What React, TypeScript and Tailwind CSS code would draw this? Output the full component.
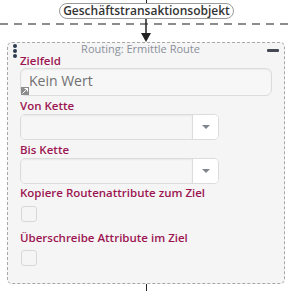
import React from "react";

const font = { fontFamily: '"Open Sans", "Noto Sans", sans-serif' };

function FieldLabel({ text, className = "" }: { text: string; className?: string }) {
  return (
    <div className={`h-[14px] text-[11.5px] leading-[14px] font-semibold text-[#9c1552] whitespace-nowrap ${className}`}>
      {text}
    </div>
  );
}

function SelectBox() {
  return (
    <div className="flex h-[26px] w-[199px] rounded-[5px] border border-[#dcdcdc] bg-white overflow-hidden">
      <div className="flex-1 bg-[#f6f6f6] shadow-[inset_0_1px_2px_rgba(0,0,0,0.06)]" />
      <div className="flex w-[26px] items-center justify-center border-l border-[#dcdcdc] bg-white">
        <svg width="8" height="4" viewBox="0 0 8 4">
          <path d="M0 0 H8 L4 4 Z" fill="#7f8690" />
        </svg>
      </div>
    </div>
  );
}

function Checkbox({ className = "" }: { className?: string }) {
  return <div className={`h-[16px] w-[16px] rounded-[3px] border border-[#d8d8d8] bg-[#f5f5f5] ${className}`} />;
}

export default function App() {
  return (
    <div className="h-[291px] w-[293px] overflow-hidden bg-white" style={font}>
      {/* connector above the node */}
      <div className="flex flex-col items-center">
        <div className="h-[3px] w-px bg-[#222]" />
        <div className="rounded-full border border-[#9a9a9a] bg-white px-[3px] text-[12px] leading-[14px] font-semibold text-[#333] whitespace-nowrap">
          Geschäftstransaktionsobjekt
        </div>
        <svg width="293" height="23" viewBox="0 0 293 23" className="block">
          <line x1="0" y1="5" x2="293" y2="5" stroke="#8c8c8c" strokeWidth="2" strokeDasharray="8 6" />
          <line x1="146" y1="0" x2="146" y2="15" stroke="#222" strokeWidth="1.5" />
          <path d="M141 14 H151 L146 23 Z" fill="#222" />
        </svg>
      </div>

      {/* node */}
      <div className="mx-[7px] h-[242px] w-[278px] rounded-[5px] border border-dashed border-[#a8a8a8] bg-[#f5f5f5]">
        <div className="relative h-[11px]">
          <div className="absolute left-[5px] top-[1px] flex flex-col gap-[1px]">
            <span className="h-[4px] w-[4px] rounded-full bg-[#2e3a4e]" />
            <span className="h-[4px] w-[4px] rounded-full bg-[#2e3a4e]" />
            <span className="h-[4px] w-[4px] rounded-full bg-[#2e3a4e]" />
          </div>
          <div className="pr-[11px] text-center text-[11px] leading-[11px] text-[#8b909b]">Routing: Ermittle Route</div>
          <div className="absolute right-[5px] top-[6px] h-[3px] w-[12px] rounded-[1px] bg-[#454a52]" />
        </div>

        <div className="pl-[12px]">
          <FieldLabel text="Zielfeld" />
          <div className="relative h-[28px] w-[252px] rounded-[6px] border border-[#dcdcdc] bg-[#f7f7f7] shadow-[inset_0_1px_2px_rgba(0,0,0,0.05)]">
            <div className="pl-[8px] pt-[3px] text-[14px] leading-[18px] font-medium text-[#707070]">Kein Wert</div>
            <div className="absolute bottom-0 left-0 flex h-[8px] w-[8px] items-center justify-center bg-[#8c8c8c]">
              <svg width="8" height="8" viewBox="0 0 8 8">
                <path d="M1.5 6.5 L6.5 1.5 M3.5 1.5 H6.5 V4.5" stroke="#fff" strokeWidth="1" fill="none" />
              </svg>
            </div>
          </div>

          <FieldLabel text="Von Kette" className="mt-[3px] mb-[1px]" />
          <SelectBox />

          <FieldLabel text="Bis Kette" className="mt-[3px] mb-[1px]" />
          <SelectBox />

          <FieldLabel text="Kopiere Routenattribute zum Ziel" className="mt-[2px]" />
          <Checkbox className="mt-[6px] ml-[1px]" />

          <FieldLabel text="Überschreibe Attribute im Ziel" className="mt-[9px]" />
          <Checkbox className="mt-[5px] ml-[1px]" />
        </div>
      </div>

      <div className="ml-[146px] h-[8px] w-px bg-[#222]" />
    </div>
  );
}
